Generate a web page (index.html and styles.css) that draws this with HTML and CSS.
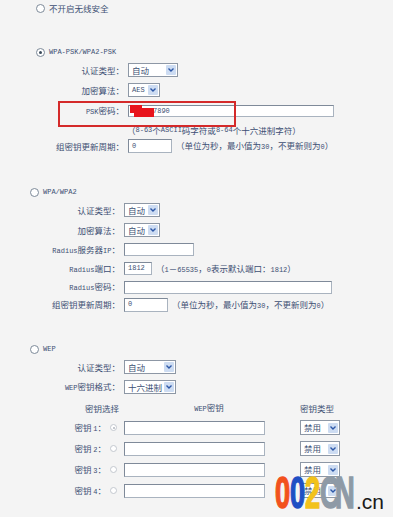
FILE: index.html
```html
<!DOCTYPE html>
<html>
<head>
  <meta charset="utf-8">
  <title>无线安全设置</title>
  <link rel="stylesheet" href="styles.css">
</head>
<body>
<div class="page">

  <div class="opt opt-none"><span class="radio"></span>不开启无线安全</div>

  <div class="opt opt-psk"><span class="radio on"></span><span class="en">WPA-PSK/WPA2-PSK</span></div>
  <div class="sec sec-psk">
    <div class="row h20"><label>认证类型：</label><span class="sel w50">自动<i class="arr"><svg width="6" height="4" viewBox="0 0 6 4"><path d="M0.5 0.5 L3 3 L5.5 0.5" /></svg></i></span></div>
    <div class="row h20"><label>加密算法：</label><span class="sel w32"><span class="en">AES</span><i class="arr"><svg width="6" height="4" viewBox="0 0 6 4"><path d="M0.5 0.5 L3 3 L5.5 0.5" /></svg></i></span></div>
    <div class="row h22 psk-row">
      <label><span class="en">PSK</span>密码：</label>
      <span class="inp w206"><span class="redact"></span><span class="en">7890</span></span>
      <span class="mark"></span>
    </div>
    <div class="row h16 hint-row">（<span class="en">8-63</span>个<span class="en">ASCII</span>码字符或<span class="en">8-64</span>个十六进制字符）</div>
    <div class="row h16"><label>组密钥更新周期：</label><span class="inp w44"><span class="en">0</span></span><span class="note">（单位为秒，最小值为<span class="en">30</span>，不更新则为<span class="en">0</span>）</span></div>
  </div>

  <div class="opt opt-wpa"><span class="radio"></span><span class="en">WPA/WPA2</span></div>
  <div class="sec sec-wpa">
    <div class="row h20"><label>认证类型：</label><span class="sel w36">自动<i class="arr"><svg width="6" height="4" viewBox="0 0 6 4"><path d="M0.5 0.5 L3 3 L5.5 0.5" /></svg></i></span></div>
    <div class="row h20"><label>加密算法：</label><span class="sel w36">自动<i class="arr"><svg width="6" height="4" viewBox="0 0 6 4"><path d="M0.5 0.5 L3 3 L5.5 0.5" /></svg></i></span></div>
    <div class="row h19"><label><span class="en">Radius</span>服务器<span class="en">IP</span>：</label><span class="inp w70"></span></div>
    <div class="row h19"><label><span class="en">Radius</span>端口：</label><span class="inp w28"><span class="en">1812</span></span><span class="note">（<span class="en">1</span>－<span class="en">65535</span>，<span class="en">0</span>表示默认端口：<span class="en">1812</span>）</span></div>
    <div class="row h18"><label><span class="en">Radius</span>密码：</label><span class="inp w208"></span></div>
    <div class="row h17"><label>组密钥更新周期：</label><span class="inp w44"><span class="en">0</span></span><span class="note">（单位为秒，最小值为<span class="en">30</span>，不更新则为<span class="en">0</span>）</span></div>
  </div>

  <div class="opt opt-wep"><span class="radio"></span><span class="en">WEP</span></div>
  <div class="sec sec-wep">
    <div class="row h20"><label>认证类型：</label><span class="sel w52">自动<i class="arr"><svg width="6" height="4" viewBox="0 0 6 4"><path d="M0.5 0.5 L3 3 L5.5 0.5" /></svg></i></span></div>
    <div class="row h20"><label><span class="en">WEP</span>密钥格式：</label><span class="sel w52">十六进制<i class="arr"><svg width="6" height="4" viewBox="0 0 6 4"><path d="M0.5 0.5 L3 3 L5.5 0.5" /></svg></i></span></div>

    <div class="key-head">
      <span class="kh-sel">密钥选择</span>
      <span class="kh-key"><span class="en">WEP</span>密钥</span>
      <span class="kh-type">密钥类型</span>
    </div>

    <div class="key-row">
      <label>密钥 <span class="en">1</span>：</label><span class="radio sm on"></span><span class="inp"></span><span class="sel w40">禁用<i class="arr"><svg width="6" height="4" viewBox="0 0 6 4"><path d="M0.5 0.5 L3 3 L5.5 0.5" /></svg></i></span>
    </div>
    <div class="key-row">
      <label>密钥 <span class="en">2</span>：</label><span class="radio sm"></span><span class="inp"></span><span class="sel w40">禁用<i class="arr"><svg width="6" height="4" viewBox="0 0 6 4"><path d="M0.5 0.5 L3 3 L5.5 0.5" /></svg></i></span>
    </div>
    <div class="key-row">
      <label>密钥 <span class="en">3</span>：</label><span class="radio sm"></span><span class="inp"></span><span class="sel w40">禁用<i class="arr"><svg width="6" height="4" viewBox="0 0 6 4"><path d="M0.5 0.5 L3 3 L5.5 0.5" /></svg></i></span>
    </div>
    <div class="key-row">
      <label>密钥 <span class="en">4</span>：</label><span class="radio sm"></span><span class="inp"></span><span class="sel w40">禁用<i class="arr"><svg width="6" height="4" viewBox="0 0 6 4"><path d="M0.5 0.5 L3 3 L5.5 0.5" /></svg></i></span>
    </div>
  </div>

  <div class="logo"><span class="c1">0</span><span class="c2">0</span><span class="c3">2</span><span class="c4">C</span><span class="c4">N</span><span class="dot">.cn</span></div>
</div>
</body>
</html>
```

FILE: styles.css
```css
* {
  box-sizing: border-box;
}

body {
  margin: 0;
  padding: 0;
  background: #fff;
}

.page {
  position: relative;
  width: 393px;
  height: 517px;
  overflow: hidden;
  background: #f4f4f4;
  color: #3d4f73;
  font-family: "Noto Sans CJK SC", sans-serif;
  font-size: 8.5px;
  line-height: 1;
}

.en {
  font-family: "Liberation Mono", monospace;
  font-size: 7px;
}

/* radio options */
.opt {
  display: flex;
  align-items: center;
  height: 16px;
}

.opt .radio {
  margin-right: 4px;
}

.opt-none {
  padding-left: 36px;
}

.opt-psk {
  margin-top: 28px;
  padding-left: 36px;
}

.opt-wpa {
  margin-top: 30px;
  padding-left: 30px;
}

.opt-wep {
  margin-top: 28px;
  padding-left: 30px;
}

.radio {
  display: inline-block;
  width: 9px;
  height: 9px;
  border: 1px solid #7d8a99;
  border-radius: 50%;
  background: #fff;
  flex: none;
}

.radio.on {
  display: inline-flex;
  align-items: center;
  justify-content: center;
}

.radio.on:after {
  content: "";
  width: 3px;
  height: 3px;
  border-radius: 50%;
  background: #3a4a5a;
}

.radio.sm {
  width: 7px;
  height: 7px;
  border-color: #c3c8cf;
}

.radio.sm.on:after {
  width: 2px;
  height: 2px;
  background: #b0b6be;
}

/* rows */
.row {
  display: flex;
  align-items: center;
}

.row label {
  flex: none;
  text-align: right;
  padding-right: 4px;
}

.sec-psk .row label {
  width: 128px;
}

.sec-wpa .row label,
.sec-wep .row label {
  width: 124px;
}

.h16 { height: 16px; }
.h17 { height: 17px; }
.h18 { height: 18px; }
.h19 { height: 19px; }
.h20 { height: 20px; }
.h22 { height: 22px; }

.hint-row {
  padding-left: 127px;
  white-space: nowrap;
}

.note {
  margin-left: 4px;
  white-space: nowrap;
}

/* controls */
.inp {
  display: inline-flex;
  align-items: center;
  height: 13px;
  padding-left: 3px;
  background: #fff;
  border: 1px solid #7f8a99;
  border-right-color: #a9b3bf;
  border-bottom-color: #a9b3bf;
  flex: none;
}

.row .inp.w44 {
  height: 14px;
}

.w28 { width: 28px; }
.w32 { width: 32px; }
.w36 { width: 36px; }
.w40 { width: 40px; }
.w44 { width: 44px; }
.w50 { width: 50px; }
.w52 { width: 52px; }
.w70 { width: 70px; }
.w206 { width: 206px; }
.w208 { width: 208px; }

.sel {
  display: inline-flex;
  align-items: center;
  justify-content: space-between;
  height: 14px;
  padding-left: 3px;
  background: #fff;
  border: 1px solid #8d97a5;
  flex: none;
  white-space: nowrap;
}

.arr {
  display: flex;
  align-items: center;
  justify-content: center;
  width: 10px;
  height: 10px;
  margin-right: 1px;
  background: #cddcf2;
  border-radius: 1px;
}

.arr svg path {
  fill: none;
  stroke: #2d58a8;
  stroke-width: 1.4;
}

/* PSK row with the red highlight */
.psk-row {
  position: relative;
}

.psk-row .inp {
  height: 12px;
}

.redact {
  position: relative;
  display: inline-block;
  width: 23px;
  height: 10px;
  margin-left: -2px;
}

.redact:before,
.redact:after {
  content: "";
  position: absolute;
  background: #e8141c;
}

.redact:before {
  left: 0;
  top: -1px;
  width: 12px;
  height: 8px;
}

.redact:after {
  left: 4px;
  top: 2px;
  width: 20px;
  height: 9px;
}

.mark {
  position: absolute;
  left: 58px;
  top: 1px;
  width: 178px;
  height: 26px;
  border: 2px solid #d42a2a;
}

/* WEP keys */
.key-head {
  display: flex;
  align-items: center;
  height: 18px;
  margin-top: 2px;
  padding-left: 72px;
}

.key-head span {
  text-align: center;
}

.kh-sel {
  width: 60px;
}

.kh-key {
  width: 80px;
  margin-left: 37px;
}

.kh-type {
  width: 60px;
  margin-left: 38px;
}

.key-row {
  display: flex;
  align-items: center;
  height: 21px;
}

.key-row label {
  width: 108px;
  text-align: right;
  padding-right: 2px;
}

.key-row .radio {
  margin-left: 2px;
}

.key-row .inp {
  width: 141px;
  height: 14px;
  margin-left: 7px;
}

.key-row .sel {
  margin-left: 35px;
  height: 15px;
}

/* watermark over the bottom corner */
.logo {
  position: absolute;
  left: 275px;
  top: 472px;
  display: flex;
  align-items: flex-end;
  height: 42px;
  font-family: "Liberation Sans Narrow", "Liberation Sans", sans-serif;
  font-weight: bold;
  font-size: 44px;
  line-height: 42px;
}

.logo span {
  display: inline-block;
  width: 15px;
  transform: scaleX(0.62);
  transform-origin: left bottom;
  -webkit-text-stroke: 1.5px currentColor;
}

.logo .c1 { color: #f2511d; }
.logo .c2 { color: #1f4fc4; }
.logo .c3 { color: #f2c21b; }
.logo .c4 { color: #8e9aa6; }

.logo .dot {
  width: auto;
  margin-left: 6px;
  transform: none;
  -webkit-text-stroke: 0;
  font-family: "Liberation Sans", sans-serif;
  font-weight: normal;
  font-size: 21px;
  line-height: 24px;
  color: #1a1a1a;
}
```
